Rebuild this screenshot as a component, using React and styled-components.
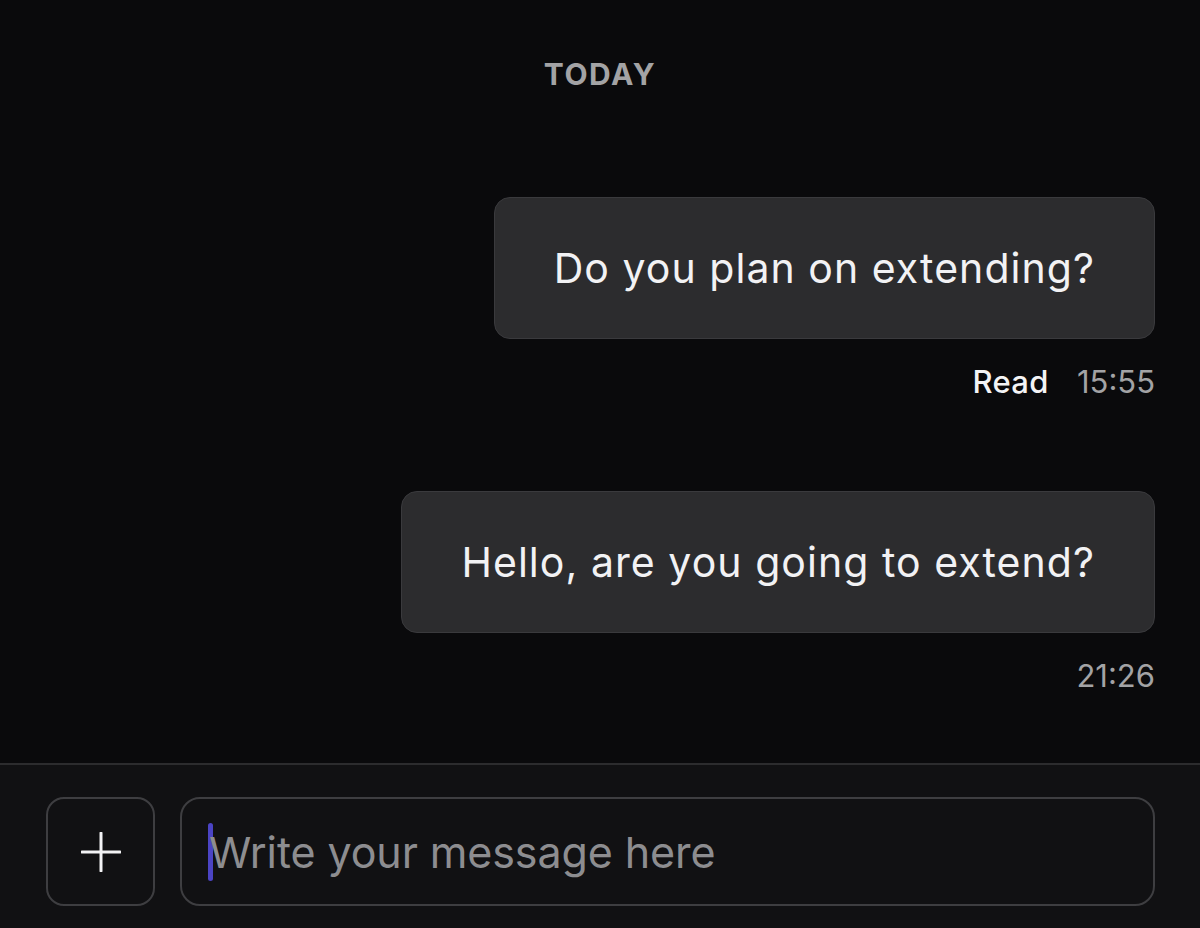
import React from 'react'
import styled, { createGlobalStyle } from 'styled-components'

const Global = createGlobalStyle`
    html, body {
        margin: 0;
        padding: 0;
        background: #0a0a0c;
    }
    * {
        box-sizing: border-box;
    }
`

const Screen = styled.div`
    display: flex;
    flex-direction: column;
    height: 928px;
    background: #0a0a0c;
    font-family: Inter, "Liberation Sans", sans-serif;
`

const Thread = styled.div`
    flex: 1;
    display: flex;
    flex-direction: column;
    align-items: flex-end;
    padding: 57px 45px 0 45px;
`

const DayLabel = styled.div`
    align-self: center;
    font-size: 30px;
    font-weight: 700;
    line-height: 34px;
    color: #a3a3a5;
    letter-spacing: 1.6px;
    margin-bottom: 106px;
`

const Bubble = styled.div`
    background: #2c2c2e;
    border: 1px solid #3a3a3d;
    border-radius: 16px;
    height: 142px;
    padding: 0 59px;
    display: flex;
    align-items: center;
    font-size: 41px;
    color: #f2f2f4;
    letter-spacing: 1.05px;
`

const Meta = styled.div`
    display: flex;
    gap: 28px;
    margin-top: 26px;
    margin-bottom: ${p => p.$gap || 0}px;
    font-size: 31px;
    line-height: 34px;
`

const ReadMark = styled.span`
    color: #f4f4f6;
    font-weight: 500;
    letter-spacing: 0.4px;
`

const Time = styled.span`
    color: #a3a3a5;
`

const Composer = styled.div`
    border-top: 2px solid #2c2c2e;
    background: #111113;
    display: flex;
    gap: 25px;
    padding: 32px 45px 22px 46px;
`

const AddButton = styled.button`
    width: 109px;
    height: 109px;
    flex-shrink: 0;
    border: 2px solid #3e3e41;
    border-radius: 18px;
    background: transparent;
    display: flex;
    align-items: center;
    justify-content: center;
    padding: 0;
`

const InputBox = styled.div`
    flex: 1;
    height: 109px;
    border: 2px solid #3e3e41;
    border-radius: 20px;
    display: flex;
    align-items: center;
    padding-left: 26px;
`

const Caret = styled.span`
    width: 5px;
    height: 58px;
    border-radius: 3px;
    background: #4b44c4;
    margin-right: -4px;
`

const Placeholder = styled.span`
    font-size: 43px;
    color: #8d8d90;
    letter-spacing: -0.1px;
`

const messages = [
    { text: 'Do you plan on extending?', read: true, time: '15:55' },
    { text: 'Hello, are you going to extend?', read: false, time: '21:26' },
]

export default function App() {
    return (
        <Screen>
            <Global />
            <Thread>
                <DayLabel>TODAY</DayLabel>
                {messages.map((m, i) => (
                    <React.Fragment key={i}>
                        <Bubble>{m.text}</Bubble>
                        <Meta $gap={i === 0 ? 92 : 0}>
                            {m.read && <ReadMark>Read</ReadMark>}
                            <Time>{m.time}</Time>
                        </Meta>
                    </React.Fragment>
                ))}
            </Thread>
            <Composer>
                <AddButton aria-label="Add">
                    <svg width="40" height="40" viewBox="0 0 40 40">
                        <path d="M20 1v38M1 20h38" stroke="#f2f2f4" strokeWidth="3" strokeLinecap="round" />
                    </svg>
                </AddButton>
                <InputBox>
                    <Caret />
                    <Placeholder>Write your message here</Placeholder>
                </InputBox>
            </Composer>
        </Screen>
    )
}
